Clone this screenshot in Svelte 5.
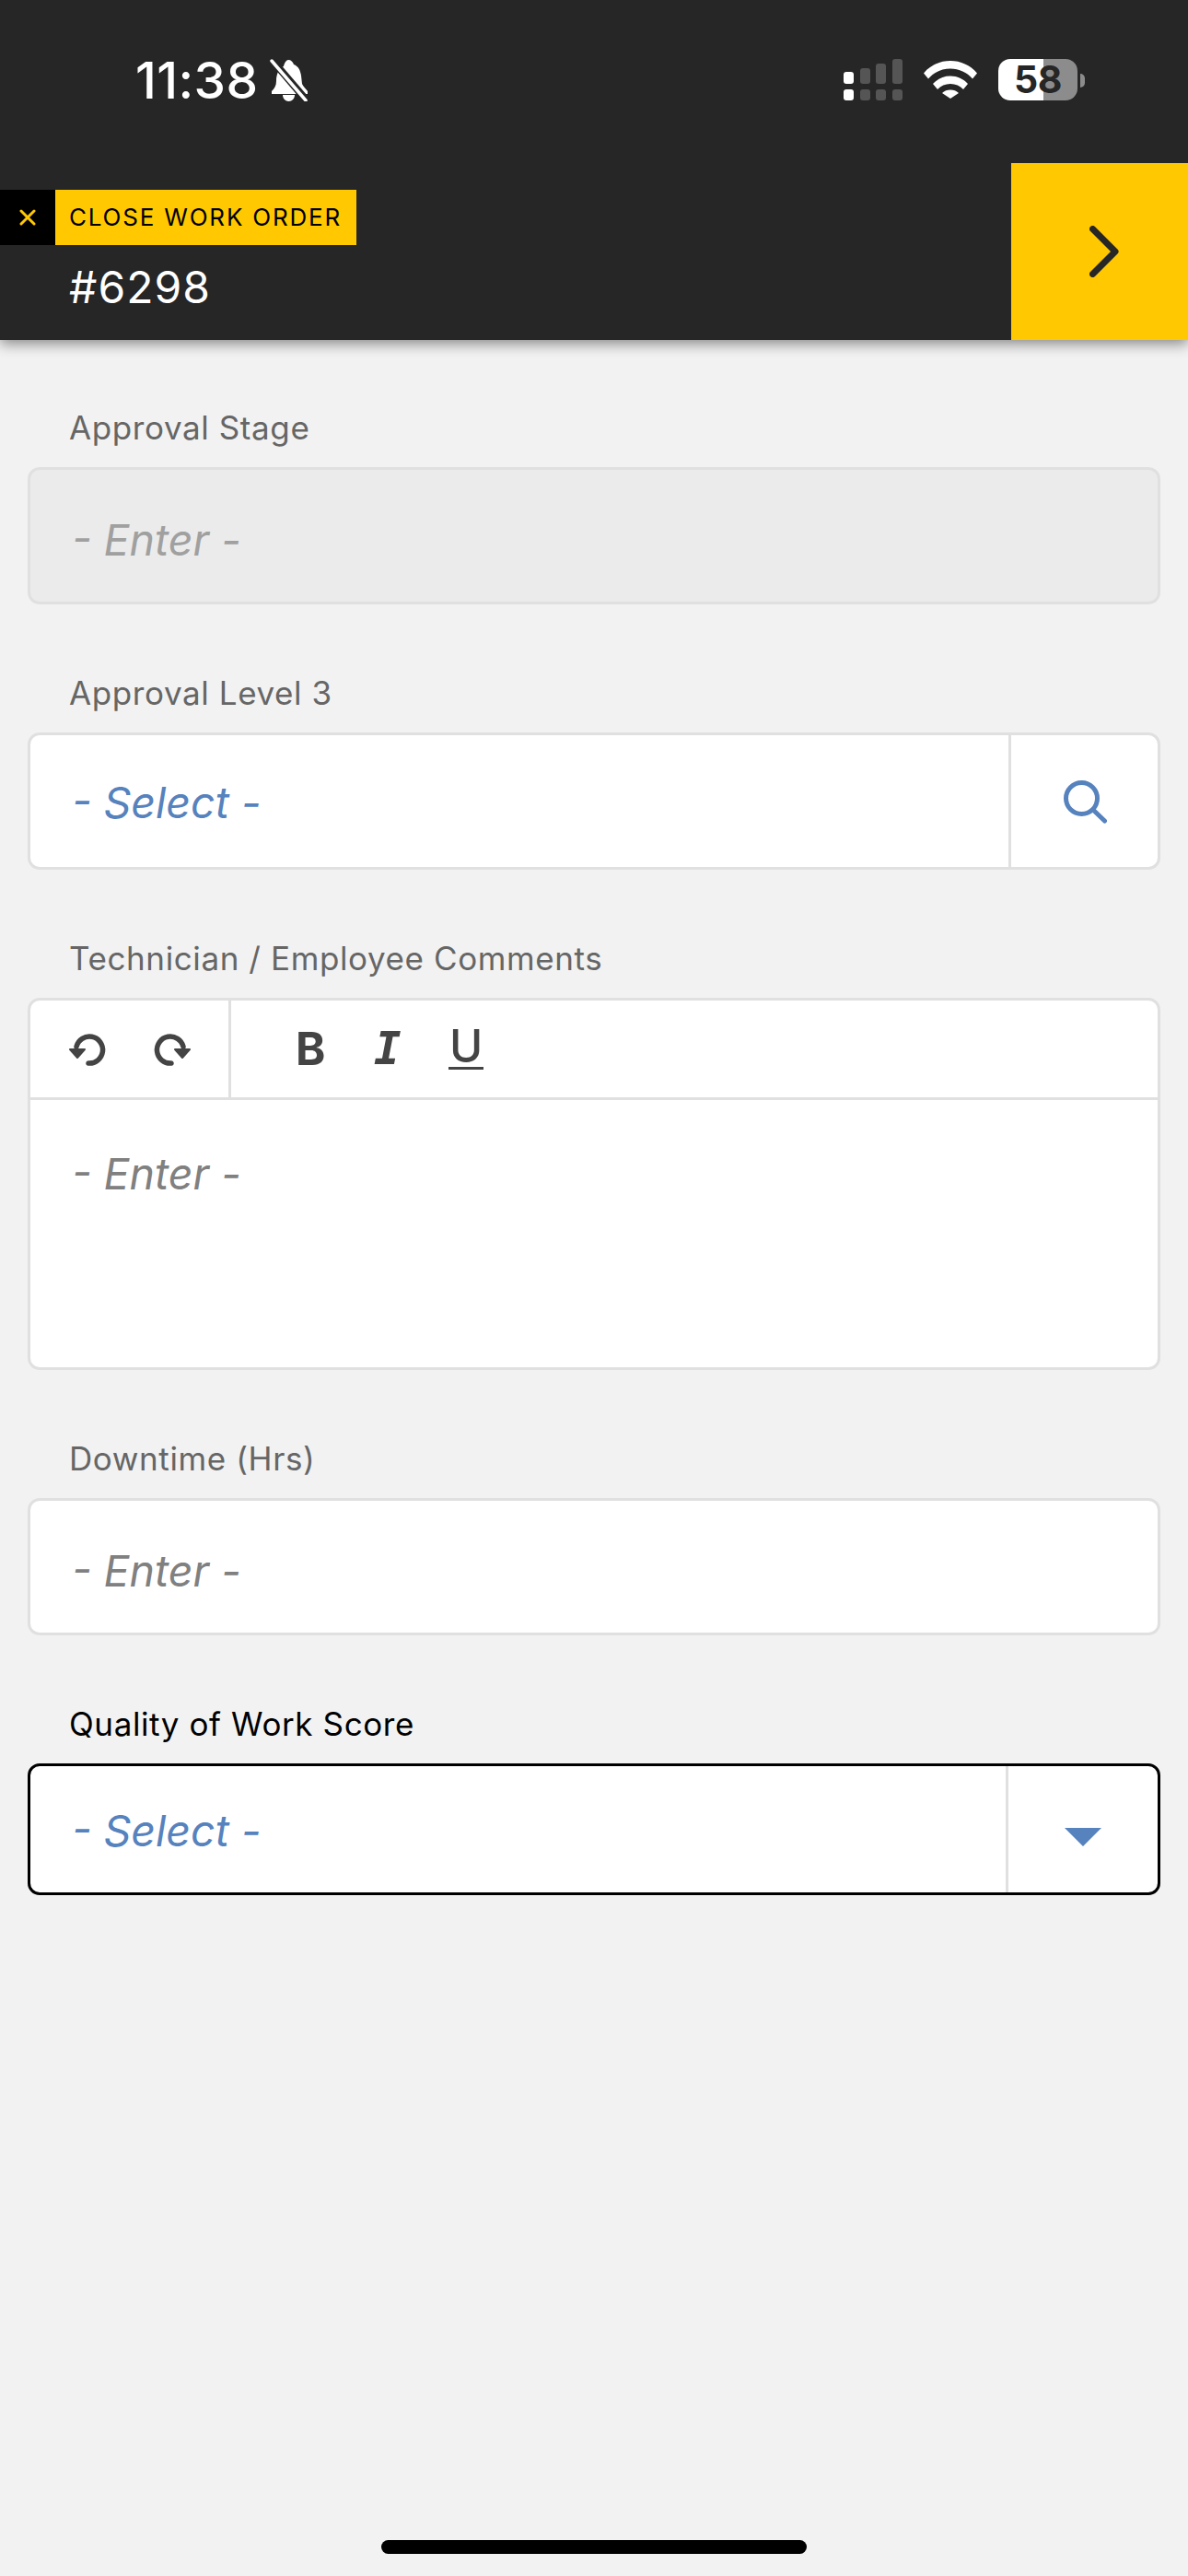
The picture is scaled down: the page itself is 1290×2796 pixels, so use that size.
<script>
  const signalTop = [
    { h: 13, on: true },
    { h: 17, on: false },
    { h: 22, on: false },
    { h: 27, on: false }
  ];
</script>

<div class="screen">
  <header class="top">
    <div class="status">
      <span class="time">11:38</span>
      <svg class="bell" viewBox="0 0 42 46" width="42" height="46">
        <path d="M20 1c3 0 5 2 6 5 5 2 7 6 8 12l1 9c1 3 4 5 6 8v3H2v-3c3-3 5-6 5-11 0-8 3-14 8-16 1-4 3-7 5-7z" fill="#fff" />
        <path d="M14 39h13c0 4-3 7-6.500 7S14 43 14 39z" fill="#fff" />
        <path d="M4 3l35 41" stroke="#262626" stroke-width="8" />
        <path d="M2 2l37 43" stroke="#fff" stroke-width="3.500" stroke-linecap="round" />
      </svg>
      <div class="status-right">
        <div class="signal">
          <div class="sig-row tall">
            {#each signalTop as bar}
              <i class:on={bar.on} style="height:{bar.h}px"></i>
            {/each}
          </div>
          <div class="sig-row">
            <i class="on"></i><i></i><i></i><i></i>
          </div>
        </div>
        <svg class="wifi" viewBox="0 0 58 43" width="58" height="43">
          <path d="M0 14.500C7.500 5.500 18 1 29 1s21.500 4.500 29 13.500l-5 6C47 13.500 38.500 9.500 29 9.500S11 13.500 5 20.500z" fill="#fff" />
          <path d="M10 26C15 20.500 21.500 17.500 29 17.500S43 20.500 48 26l-5 6C39.500 28 34.500 26 29 26s-10.500 2-14 6z" fill="#fff" />
          <path d="M20 37c2.500-2.500 5.500-3.500 9-3.500s6.500 1 9 3.500l-9 6z" fill="#fff" transform="translate(0 -1)" />
        </svg>
        <div class="battery">
          <span class="level">58</span>
          <i class="nub"></i>
        </div>
      </div>
    </div>
    <div class="bar">
      <div class="order">
        <div class="tag">
          <span class="tag-x">
            <svg viewBox="0 0 18 18" width="18" height="18">
              <path d="M2 2l14 14M16 2L2 16" stroke="#ffc800" stroke-width="3" stroke-linecap="round" />
            </svg>
          </span>
          <span class="tag-text">CLOSE WORK ORDER</span>
        </div>
        <div class="number">#6298</div>
      </div>
      <button class="next" aria-label="Next">
        <svg viewBox="0 0 32 56" width="32" height="56">
          <path d="M3.500 3.500L28 28 3.500 52.500" fill="none" stroke="#262626" stroke-width="7" stroke-linecap="round" stroke-linejoin="round" />
        </svg>
      </button>
    </div>
  </header>

  <main class="form">
    <section class="field">
      <span class="label">Approval Stage</span>
      <div class="box disabled"><span class="ph">- Enter -</span></div>
    </section>

    <section class="field">
      <span class="label">Approval Level 3</span>
      <div class="box">
        <span class="ph blue">- Select -</span>
        <span class="side">
          <svg viewBox="0 0 48 48" width="48" height="48">
            <circle cx="20.500" cy="20.500" r="17" fill="none" stroke="#5682bd" stroke-width="5" />
            <path d="M33 33l12.500 12" stroke="#5682bd" stroke-width="5" stroke-linecap="round" />
          </svg>
        </span>
      </div>
    </section>

    <section class="field">
      <span class="label">Technician / Employee Comments</span>
      <div class="editor">
        <div class="toolbar">
          <div class="history">
            <svg viewBox="0 0 42 38" width="42" height="38">
              <path d="M8 16a14.500 14.500 0 1 1 13 18" fill="none" stroke="#444" stroke-width="5.500" stroke-linecap="round" />
              <path d="M0 24h16l-8 9z" fill="#444" stroke="#444" stroke-width="2" stroke-linejoin="round" transform="translate(1 -5)" />
            </svg>
            <svg class="flip" viewBox="0 0 42 38" width="42" height="38">
              <path d="M8 16a14.500 14.500 0 1 1 13 18" fill="none" stroke="#444" stroke-width="5.500" stroke-linecap="round" />
              <path d="M0 24h16l-8 9z" fill="#444" stroke="#444" stroke-width="2" stroke-linejoin="round" transform="translate(1 -5)" />
            </svg>
          </div>
          <div class="format">
            <b class="fmt-b">B</b>
            <span class="fmt-i">I</span>
            <span class="fmt-u">U</span>
          </div>
        </div>
        <div class="editor-body"><span class="ph">- Enter -</span></div>
      </div>
    </section>

    <section class="field">
      <span class="label">Downtime (Hrs)</span>
      <div class="box"><span class="ph">- Enter -</span></div>
    </section>

    <section class="field active">
      <span class="label">Quality of Work Score</span>
      <div class="box">
        <span class="ph blue">- Select -</span>
        <span class="side">
          <i class="caret"></i>
        </span>
      </div>
    </section>
  </main>

  <div class="home"><i></i></div>
</div>

<style>
  :global(body) {
    margin: 0;
    background: #f2f2f2;
  }

  .screen {
    width: 1290px;
    height: 2796px;
    display: flex;
    flex-direction: column;
    background: #f2f2f2;
    font-family: Inter, "Liberation Sans", sans-serif;
  }

  .top {
    background: #262626;
    box-shadow: 0 4px 14px rgba(0, 0, 0, 0.45);
  }

  .status {
    height: 177px;
    box-sizing: border-box;
    padding: 60px 120px 0 147px;
    display: flex;
    align-items: flex-start;
    color: #fff;
  }

  .time {
    font-size: 55px;
    line-height: 54px;
    font-weight: 500;
    letter-spacing: 0.4px;
  }

  .bell {
    margin: 4px 0 0 13px;
  }

  .status-right {
    margin-left: auto;
    display: flex;
    gap: 23px;
    padding-top: 4px;
  }

  .signal {
    width: 64px;
    display: flex;
    flex-direction: column;
    gap: 6px;
  }

  .sig-row {
    display: flex;
    justify-content: space-between;
  }

  .sig-row.tall {
    height: 27px;
    align-items: flex-end;
  }

  .sig-row i {
    width: 11px;
    height: 12px;
    border-radius: 3px;
    background: #555;
  }

  .sig-row i.on {
    background: #fff;
  }

  .wifi {
    margin-top: 1px;
  }

  .battery {
    position: relative;
    width: 86px;
    height: 45px;
    border-radius: 13px;
    background: linear-gradient(to right, #fff 57%, #8c8c8c 57%);
    display: flex;
    align-items: center;
    justify-content: center;
  }

  .level {
    font-size: 41px;
    line-height: 45px;
    font-weight: 700;
    color: #262626;
    letter-spacing: -0.5px;
  }

  .nub {
    position: absolute;
    left: 89px;
    top: 16px;
    width: 5px;
    height: 15px;
    border-radius: 0 5px 5px 0;
    background: #8c8c8c;
  }

  .bar {
    height: 192px;
    display: flex;
    justify-content: space-between;
  }

  .order {
    padding-top: 29px;
  }

  .tag {
    display: flex;
    height: 60px;
    width: 387px;
  }

  .tag-x {
    width: 60px;
    background: #000;
    display: flex;
    align-items: center;
    justify-content: center;
  }

  .tag-text {
    flex: 1;
    background: #ffc800;
    color: #000;
    padding-left: 15px;
    font-size: 26px;
    line-height: 60px;
    letter-spacing: 1.8px;
  }

  .number {
    margin: 17px 0 0 75px;
    color: #fff;
    font-size: 48px;
    line-height: 58px;
    letter-spacing: 1px;
  }

  .next {
    width: 192px;
    border: 0;
    padding: 0 0 0 10px;
    background: #ffc800;
    display: flex;
    align-items: center;
    justify-content: center;
  }

  .form {
    padding: 74px 30px 0;
    display: flex;
    flex-direction: column;
    gap: 75px;
  }

  .label {
    display: block;
    margin: 0 0 22px 45px;
    font-size: 35px;
    line-height: 42px;
    letter-spacing: 0.6px;
    color: #666;
  }

  .box {
    height: 149px;
    box-sizing: border-box;
    border: 3px solid #e0e0e0;
    border-radius: 13px;
    background: #fff;
    display: flex;
    align-items: center;
    justify-content: space-between;
  }

  .box.disabled {
    background: #ebebeb;
  }

  .disabled .ph {
    color: #a0a0a0;
  }

  .ph {
    margin: 8px 0 0 45px;
    font-size: 46.500px;
    font-style: italic;
    color: #808080;
  }

  .ph.blue {
    margin-top: 3px;
    color: #5682bd;
  }

  .side {
    width: 162px;
    box-sizing: border-box;
    align-self: stretch;
    border-left: 3px solid #e0e0e0;
    display: flex;
    align-items: center;
    justify-content: center;
  }

  .editor {
    height: 404px;
    box-sizing: border-box;
    border: 3px solid #e0e0e0;
    border-radius: 13px;
    background: #fff;
  }

  .toolbar {
    height: 105px;
    border-bottom: 3px solid #e0e0e0;
    display: flex;
  }

  .history {
    width: 218px;
    border-right: 3px solid #e0e0e0;
    display: flex;
    align-items: center;
    padding-left: 42px;
    gap: 48px;
    box-sizing: border-box;
  }

  .flip {
    transform: scaleX(-1);
  }

  .format {
    display: flex;
    align-items: center;
    color: #444;
    font-size: 49px;
    line-height: 49px;
    padding-left: 70px;
  }

  .fmt-b {
    width: 85px;
    font-weight: 700;
  }

  .fmt-i {
    width: 81px;
    font-family: "DejaVu Sans Mono", monospace;
    font-style: italic;
    font-weight: 700;
  }

  .fmt-u {
    font-weight: 500;
    border-bottom: 3px solid #444;
    line-height: 38px;
    padding: 0 1px 3px;
  }

  .editor-body {
    padding-top: 45px;
  }

  .editor-body .ph {
    display: block;
    line-height: 54px;
  }

  .active .label {
    color: #000;
  }

  .active .box {
    height: 143px;
    border-color: #000;
  }

  .active .side {
    width: 165px;
  }

  .caret {
    width: 0;
    height: 0;
    border-left: 20px solid transparent;
    border-right: 20px solid transparent;
    border-top: 20px solid #5682bd;
    margin-top: 17px;
  }

  .home {
    margin-top: auto;
    height: 39px;
    display: flex;
    justify-content: center;
  }

  .home i {
    width: 462px;
    height: 15px;
    border-radius: 8px;
    background: #000;
  }
</style>
